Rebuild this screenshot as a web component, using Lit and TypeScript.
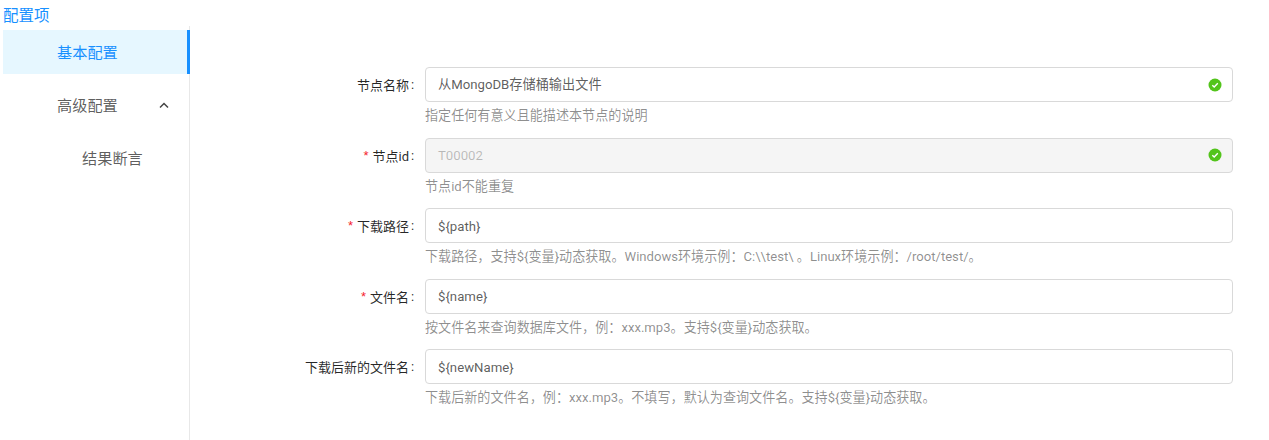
import { LitElement, html, css, svg } from "lit";
import { customElement } from "lit/decorators.js";

const check = svg`<svg class="ok" viewBox="0 0 14 14" width="14" height="14"><circle cx="7" cy="7" r="6.5" fill="#52c41a"/><path d="M4.3 7.2 6.2 9 9.8 5.3" fill="none" stroke="#fff" stroke-width="1.4"/></svg>`;

const rows = [
  { label: "节点名称", req: false, value: "从MongoDB存储桶输出文件", latin: false, ok: true, dis: false, help: "指定任何有意义且能描述本节点的说明" },
  { label: "节点id", req: true, value: "T00002", latin: true, ok: true, dis: true, help: "节点id不能重复" },
  { label: "下载路径", req: true, value: "${path}", latin: true, ok: false, dis: false, help: "下载路径，支持${变量}动态获取。Windows环境示例：C:\\\\test\\ 。Linux环境示例：/root/test/。" },
  { label: "文件名", req: true, value: "${name}", latin: true, ok: false, dis: false, help: "按文件名来查询数据库文件，例：xxx.mp3。支持${变量}动态获取。" },
  { label: "下载后新的文件名", req: false, value: "${newName}", latin: true, ok: false, dis: false, help: "下载后新的文件名，例：xxx.mp3。不填写，默认为查询文件名。支持${变量}动态获取。" },
];

@customElement("app-root")
export class AppRoot extends LitElement {
  static styles = css`
    :host { display: block; width: 1269px; height: 440px; overflow: hidden; background: #fff;
      font-family: Roboto, "Noto Sans CJK SC", sans-serif; }
    .title { height: 26px; padding: 6px 0 0 3px; box-sizing: border-box; font-size: 15.5px; line-height: 21px; color: #1890ff; }
    .body { display: flex; padding-left: 3px; height: 414px; }
    .side { width: 187px; box-sizing: border-box; border-right: 1px solid #e8e8e8; padding-top: 4px; font-size: 15.2px; color: rgba(0,0,0,.65); }
    .item { height: 44px; line-height: 46px; padding-left: 54px; box-sizing: border-box; margin-right: -1px; }
    .sel { background: #e6f7ff; color: #1890ff; border-right: 3px solid #1890ff; margin-bottom: 9px; }
    .sub { display: flex; align-items: center; justify-content: space-between; padding-top: 2px; padding-right: 20px; margin-right: 0; margin-bottom: 9px; }
    .sub svg { margin-top: -2px; }
    .child { padding-left: 79px; }
    .form { flex: 1; padding-top: 41px; padding-left: 13px; }
    .row { display: flex; height: 70.5px; }
    .label { width: 222px; padding-right: 8px; box-sizing: border-box; height: 35px; display: flex; justify-content: flex-end; align-items: center; font-size: 13px; color: rgba(0,0,0,.85); white-space: nowrap; }
    .star { color: #f5222d; margin-right: 4px; font-family: "Liberation Sans", sans-serif; font-size: 13px; }
    .colon { margin-left: 2px; width: 6px; }
    .field { width: 808px; }
    .input { height: 35px; box-sizing: border-box; border: 1px solid #d9d9d9; border-radius: 4px; display: flex; align-items: center; justify-content: space-between; padding: 0 10px 0 12px; font-size: 13.2px; color: rgba(0,0,0,.65); background: #fff; }
    .val { line-height: 20px; }
    .latin { padding-top: 2px; }
    .dis { background: #f5f5f5; color: rgba(0,0,0,.25); }
    .ok { display: block; }
    .help { font-size: 13.1px; line-height: 21px; margin-top: 3px; color: rgba(0,0,0,.45); white-space: nowrap; }
  `;
  render() {
    return html`
      <div class="title">配置项</div>
      <div class="body">
        <div class="side">
          <div class="item sel">基本配置</div>
          <div class="item sub">高级配置
            <svg width="10" height="7" viewBox="0 0 10 7"><path d="M1 5.5 5 1.5 9 5.5" fill="none" stroke="#444" stroke-width="1.5"/></svg>
          </div>
          <div class="item child">结果断言</div>
        </div>
        <div class="form">
          ${rows.map(r => html`<div class="row">
            <div class="label">${r.req ? html`<span class="star">*</span>` : ""}${r.label}<span class="colon">:</span></div>
            <div class="field">
              <div class="input ${r.dis ? "dis" : ""}"><span class="val ${r.latin ? "latin" : ""}">${r.value}</span>${r.ok ? check : ""}</div>
              <div class="help">${r.help}</div>
            </div>
          </div>`)}
        </div>
      </div>`;
  }
}
